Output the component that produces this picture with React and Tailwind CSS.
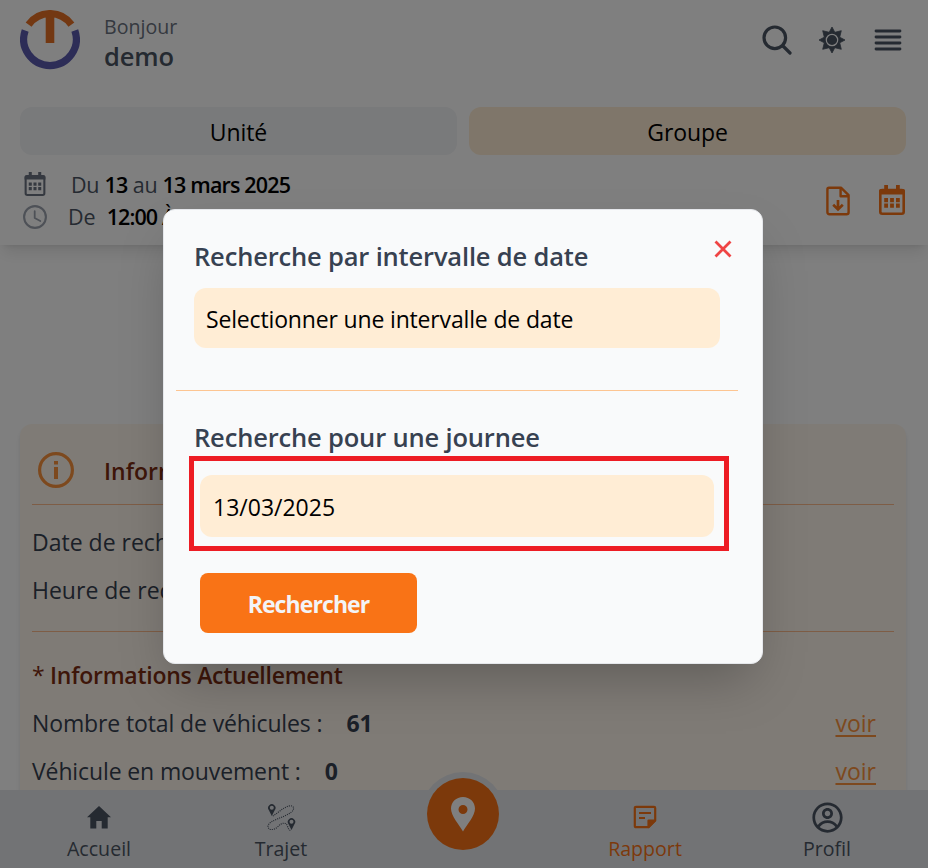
import React from "react";
import { CgProfile } from "react-icons/cg";

function Logo() {
  return (
    <svg width="60" height="60" viewBox="0 0 60 60" fill="none">
      <path d="M5.2 20.5 A26.3 26.3 0 1 0 54.8 20.5" stroke="#5a5aae" strokeWidth="7.2" />
      <path d="M8.6 14.6 A26.3 26.3 0 0 1 51.4 14.6" stroke="#e77124" strokeWidth="7.2" />
      <path d="M30 4V33" stroke="#e77124" strokeWidth="8.6" />
    </svg>
  );
}

function SearchIcon() {
  return (
    <svg width="30" height="30" viewBox="0 0 30 30" fill="none" stroke="currentColor" strokeLinecap="round">
      <circle cx="12.8" cy="12.8" r="10.8" strokeWidth="3.2" />
      <path d="M21 21L28 28" strokeWidth="3.2" />
    </svg>
  );
}

function SunIcon() {
  return (
    <svg width="28" height="28" viewBox="0 0 28 28" fill="currentColor">
      <path
        d="M14 1L16.8 6.3L23.3 4.7L21.7 11.2L27 14L21.7 16.8L23.3 23.3L16.8 21.7L14 27L11.2 21.7L4.7 23.3L6.3 16.8L1 14L6.3 11.2L4.7 4.7L11.2 6.3Z"
        stroke="currentColor"
        strokeWidth="0.8"
        strokeLinejoin="round"
      />
      <circle cx="14" cy="14" r="5.7" fill="none" stroke="#fff" strokeWidth="1.2" />
    </svg>
  );
}

function MenuIcon() {
  return (
    <svg width="28" height="24" viewBox="0 0 28 24" stroke="currentColor" strokeWidth="2.8" strokeLinecap="round">
      <path d="M2 3H26M2 9H26M2 15H26M2 21H26" />
    </svg>
  );
}

function CalendarIcon({ className }) {
  return (
    <svg className={className} viewBox="0 0 26 30" fill="currentColor">
      <rect x="1.3" y="5" width="23.4" height="23.7" rx="2" fill="none" stroke="currentColor" strokeWidth="2.6" />
      <path d="M0 9.4V6Q0 4 2 4H24Q26 4 26 6V9.4ZM5.2 0H9V5H5.2ZM17 0H20.8V5H17Z" />
      <path d="M5.2 13H9V17.2H5.2ZM11.1 13H14.9V17.2H11.1ZM17 13H20.8V17.2H17ZM5.2 18.6H9V22.8H5.2ZM11.1 18.6H14.9V22.8H11.1ZM17 18.6H20.8V22.8H17Z" />
    </svg>
  );
}

function ClockIcon() {
  return (
    <svg width="24" height="24" viewBox="0 0 24 24" fill="none" stroke="currentColor" strokeLinecap="round">
      <circle cx="12" cy="12" r="10.9" strokeWidth="2.1" />
      <path d="M11.7 6.2V13L17.3 16" strokeWidth="1.8" strokeLinejoin="round" />
    </svg>
  );
}

function FileIcon() {
  return (
    <svg width="24" height="30" viewBox="0 0 24 30" fill="none" stroke="currentColor" strokeWidth="2.4" strokeLinejoin="round">
      <path d="M3 1.8H15.2L22.6 9.2V26.2Q22.6 28.2 20.6 28.2H3.4Q1.4 28.2 1.4 26.2V3.4Q1.4 1.8 3 1.8Z" />
      <path d="M14.6 2V10.2H22" />
      <path d="M12 14V23M7.2 18.7L12 23.4L16.8 18.7" strokeWidth="2.7" strokeLinejoin="miter" />
    </svg>
  );
}

function InfoIcon() {
  return (
    <svg width="36" height="36" viewBox="0 0 36 36" fill="none">
      <circle cx="18" cy="18" r="16.4" stroke="currentColor" strokeWidth="3.2" />
      <path d="M16 9H20V12.4H16ZM16 15H20V27H16Z" fill="currentColor" />
    </svg>
  );
}

function HomeIcon() {
  return (
    <svg width="24" height="23" viewBox="0 0 24 23" fill="currentColor">
      <path d="M12 0L24 11.2H20.7V22.5H14.7V15H9.3V22.5H3.3V11.2H0Z" />
    </svg>
  );
}

function RouteIcon() {
  return (
    <svg width="30" height="30" viewBox="0 0 30 30" fill="none">
      <path
        d="M6.8 14C12 11 17 5.5 23 4C28 3 29 7 25.5 10C18 16 3 18 2 24C2 29 8 28 11 25.5C16 20 20 20 21.5 24C22 27 23.5 28 25 29"
        stroke="currentColor"
        strokeWidth="1.1"
        strokeDasharray="1.1 1"
      />
      <path
        d="M5.8 14L2.9 8.2A3.7 3.7 0 1 1 8.7 8.2ZM5.8 3.8A2 2 0 1 0 5.8 7.8A2 2 0 1 0 5.8 3.8ZM25.5 28L22.6 22.2A3.7 3.7 0 1 1 28.4 22.2ZM25.5 17.8A2 2 0 1 0 25.5 21.8A2 2 0 1 0 25.5 17.8Z"
        fill="currentColor"
        fillRule="evenodd"
      />
    </svg>
  );
}

function PinIcon() {
  return (
    <svg width="24" height="35" viewBox="0 0 24 35" fill="#fff">
      <path
        fillRule="evenodd"
        d="M12 0C5.2 0 0 5.1 0 11.5C0 19 8 27.5 12 34.5C16 27.5 24 19 24 11.5C24 5.1 18.8 0 12 0ZM12 8A4.5 4.5 0 1 1 12 17A4.5 4.5 0 1 1 12 8Z"
      />
    </svg>
  );
}

function NoteIcon() {
  return (
    <svg width="24" height="24" viewBox="0 0 24 24" fill="none" stroke="currentColor" strokeWidth="2.2" strokeLinejoin="round">
      <path d="M3 1.8H21Q22.2 1.8 22.2 3V15.5L15.5 22.2H3Q1.8 22.2 1.8 21V3Q1.8 1.8 3 1.8Z" />
      <path d="M15.5 15.5H22L15.5 22Z" fill="currentColor" />
      <path d="M6 8H18M6 13H12" />
    </svg>
  );
}

function NavItem({ icon, label, className }) {
  return (
    <div className={`flex w-[182px] flex-col items-center text-[19.6px] ${className}`}>
      <div className="flex h-[54px] items-center">{icon}</div>
      <div className="-mt-[7px] leading-6">{label}</div>
    </div>
  );
}

function Stat({ label, value }) {
  return (
    <div className="flex h-12 items-center">
      <span className="tracking-[-0.12px]">{label}</span>
      <b className="ml-6 font-bold tracking-[-0.2px]">{value}</b>
      <span className="mr-[18px] ml-auto text-[#fb923c] underline decoration-2 underline-offset-[3px]">voir</span>
    </div>
  );
}

export default function App() {
  return (
    <div className="relative flex h-[868px] w-full flex-col overflow-hidden bg-white font-['Open_Sans',sans-serif] whitespace-nowrap text-black">
      <header className="h-[245px] shrink-0 pr-[22px] pl-5 shadow-lg">
        <div className="flex h-[107px] pt-[10px]">
          <Logo />
          <div className="ml-6 pt-0.5">
            <div className="text-[19.6px] leading-[30px] text-[#6b7280]">Bonjour</div>
            <div className="-mt-px text-[25.5px] leading-[30px] font-semibold tracking-[-0.1px] text-[#4b5563]">demo</div>
          </div>
          <div className="mr-1 ml-auto flex h-[60px] items-center text-[#4b5563]">
            <SearchIcon />
            <span className="mr-7 ml-[26px]"><SunIcon /></span>
            <MenuIcon />
          </div>
        </div>
        <div className="grid grid-cols-2 gap-3 text-center text-[23px] leading-[51px] tracking-[-0.1px]">
          <div className="h-12 rounded-xl bg-[#f3f4f6]">Unité</div>
          <div className="h-12 rounded-xl bg-[#ffedd5]">Groupe</div>
        </div>
        <div className="flex items-start justify-between pt-[14px]">
          <div className="text-[21.5px] text-[#4b5563]">
            <div className="flex h-8 items-center">
              <CalendarIcon className="mr-[25px] mb-0.5 ml-1 h-6 w-[22px] text-[#6b7280]" />
              <span className="tracking-[-0.3px]">
                Du{" "}
                <b className="font-semibold tracking-[-0.8px] text-black">13</b> au{" "}
                <b className="font-semibold tracking-[-0.85px] text-black">13 mars 2025</b>
              </span>
            </div>
            <div className="flex h-8 items-center">
              <span className="mr-[21px] ml-[3px] text-[#9ca3af]"><ClockIcon /></span>
              <span>De</span>
              <b className="ml-[11px] font-semibold tracking-[-0.9px] text-black">12:00 <span className="font-normal">À</span></b>
            </div>
          </div>
          <div className="mt-4 mr-[1.5px] flex items-center gap-[28.5px] text-[#f97316]">
            <FileIcon />
            <CalendarIcon className="mb-0.5 h-[30px] w-[26px]" />
          </div>
        </div>
      </header>

      <main className="mt-[179px] mr-[22px] ml-5 h-[460px] shrink-0 rounded-xl bg-[#fff7ed] px-3 text-[23px] text-[#374151] shadow-md">
        <div className="flex h-[81px] items-center border-b border-[#fdba8c] pt-3 pl-1.5">
          <span className="text-[#fb923c]"><InfoIcon /></span>
          <h2 className="ml-[30px] pt-0.5 font-semibold text-[#7c2d12]">Informations de recherche</h2>
        </div>
        <div className="h-[127px] border-b border-[#fdba8c] pt-[14px]">
          <div className="h-12 leading-[47px]">Date de recherche</div>
          <div className="h-12 leading-[47px]">Heure de recherche</div>
        </div>
        <h2 className="mt-[19px] h-12 leading-[48px] font-semibold tracking-[-0.27px] text-[#7c2d12]">
          <span className="font-normal">*</span> Informations Actuellement
        </h2>
        <Stat label="Nombre total de véhicules :" value="61" />
        <Stat label="Véhicule en mouvement :" value="0" />
      </main>

      <nav className="absolute bottom-0 left-0 flex h-[78px] w-full bg-[#e5e7eb] pl-2">
        <NavItem icon={<HomeIcon />} label="Accueil" className="text-[#4b5563]" />
        <NavItem icon={<RouteIcon />} label="Trajet" className="text-[#4b5563]" />
        <div className="flex w-[182px] justify-center">
          <div className="-mt-[18px] flex h-[84px] w-[84px] items-center justify-center rounded-full bg-[#e5e7eb]">
            <div className="flex h-[72px] w-[72px] items-center justify-center rounded-full bg-[#f97316]">
              <PinIcon />
            </div>
          </div>
        </div>
        <NavItem icon={<NoteIcon />} label="Rapport" className="text-[#f97316]" />
        <NavItem icon={<CgProfile size={33} />} label="Profil" className="text-[#4b5563]" />
      </nav>

      <div className="absolute inset-0 flex items-start bg-black/50 pt-[209px] pl-[163px]">
        <section className="h-[455px] w-[600px] rounded-xl border border-[#e5e7eb] bg-[#f9fafb] px-3 shadow-2xl">
          <div className="flex h-[78px] justify-between pt-[30px] pr-[18px] pl-[18px]">
            <h1 className="text-[25.5px] leading-8 font-semibold tracking-[-0.17px] text-[#374151]">Recherche par intervalle de date</h1>
            <svg width="18" height="18" viewBox="0 0 18 18" stroke="#ef4444" strokeWidth="2.8">
              <path d="M1.5 1.5L16.5 16.5M16.5 1.5L1.5 16.5" />
            </svg>
          </div>
          <div className="ml-[18px] h-[60px] w-[526px] rounded-xl bg-[#ffedd5] pl-3 text-[23px] leading-[63px] tracking-[-0.16px]">
            Selectionner une intervalle de date
          </div>
          <div className="mt-[42px] mr-3 h-px bg-[#fdc592]" />
          <h1 className="mt-[30px] ml-[18px] text-[25.5px] leading-8 font-semibold tracking-[-0.17px] text-[#374151]">Recherche pour une journee</h1>
          <div className="mt-[3px] ml-[13px] h-[95px] w-[540px] border-[5px] border-[#ed1c24] pt-[14px] pl-1.5">
            <div className="h-[62px] w-[514px] rounded-xl bg-[#ffedd5] pl-[13px] text-[23px] leading-[65px]">13/03/2025</div>
          </div>
          <button className="mt-[22px] ml-6 block h-[60px] w-[217px] rounded-lg bg-[#f97316] pt-0.5 text-[23px] font-bold tracking-[-0.9px] text-[#f3f4f6]">
            Rechercher
          </button>
        </section>
      </div>
    </div>
  );
}
